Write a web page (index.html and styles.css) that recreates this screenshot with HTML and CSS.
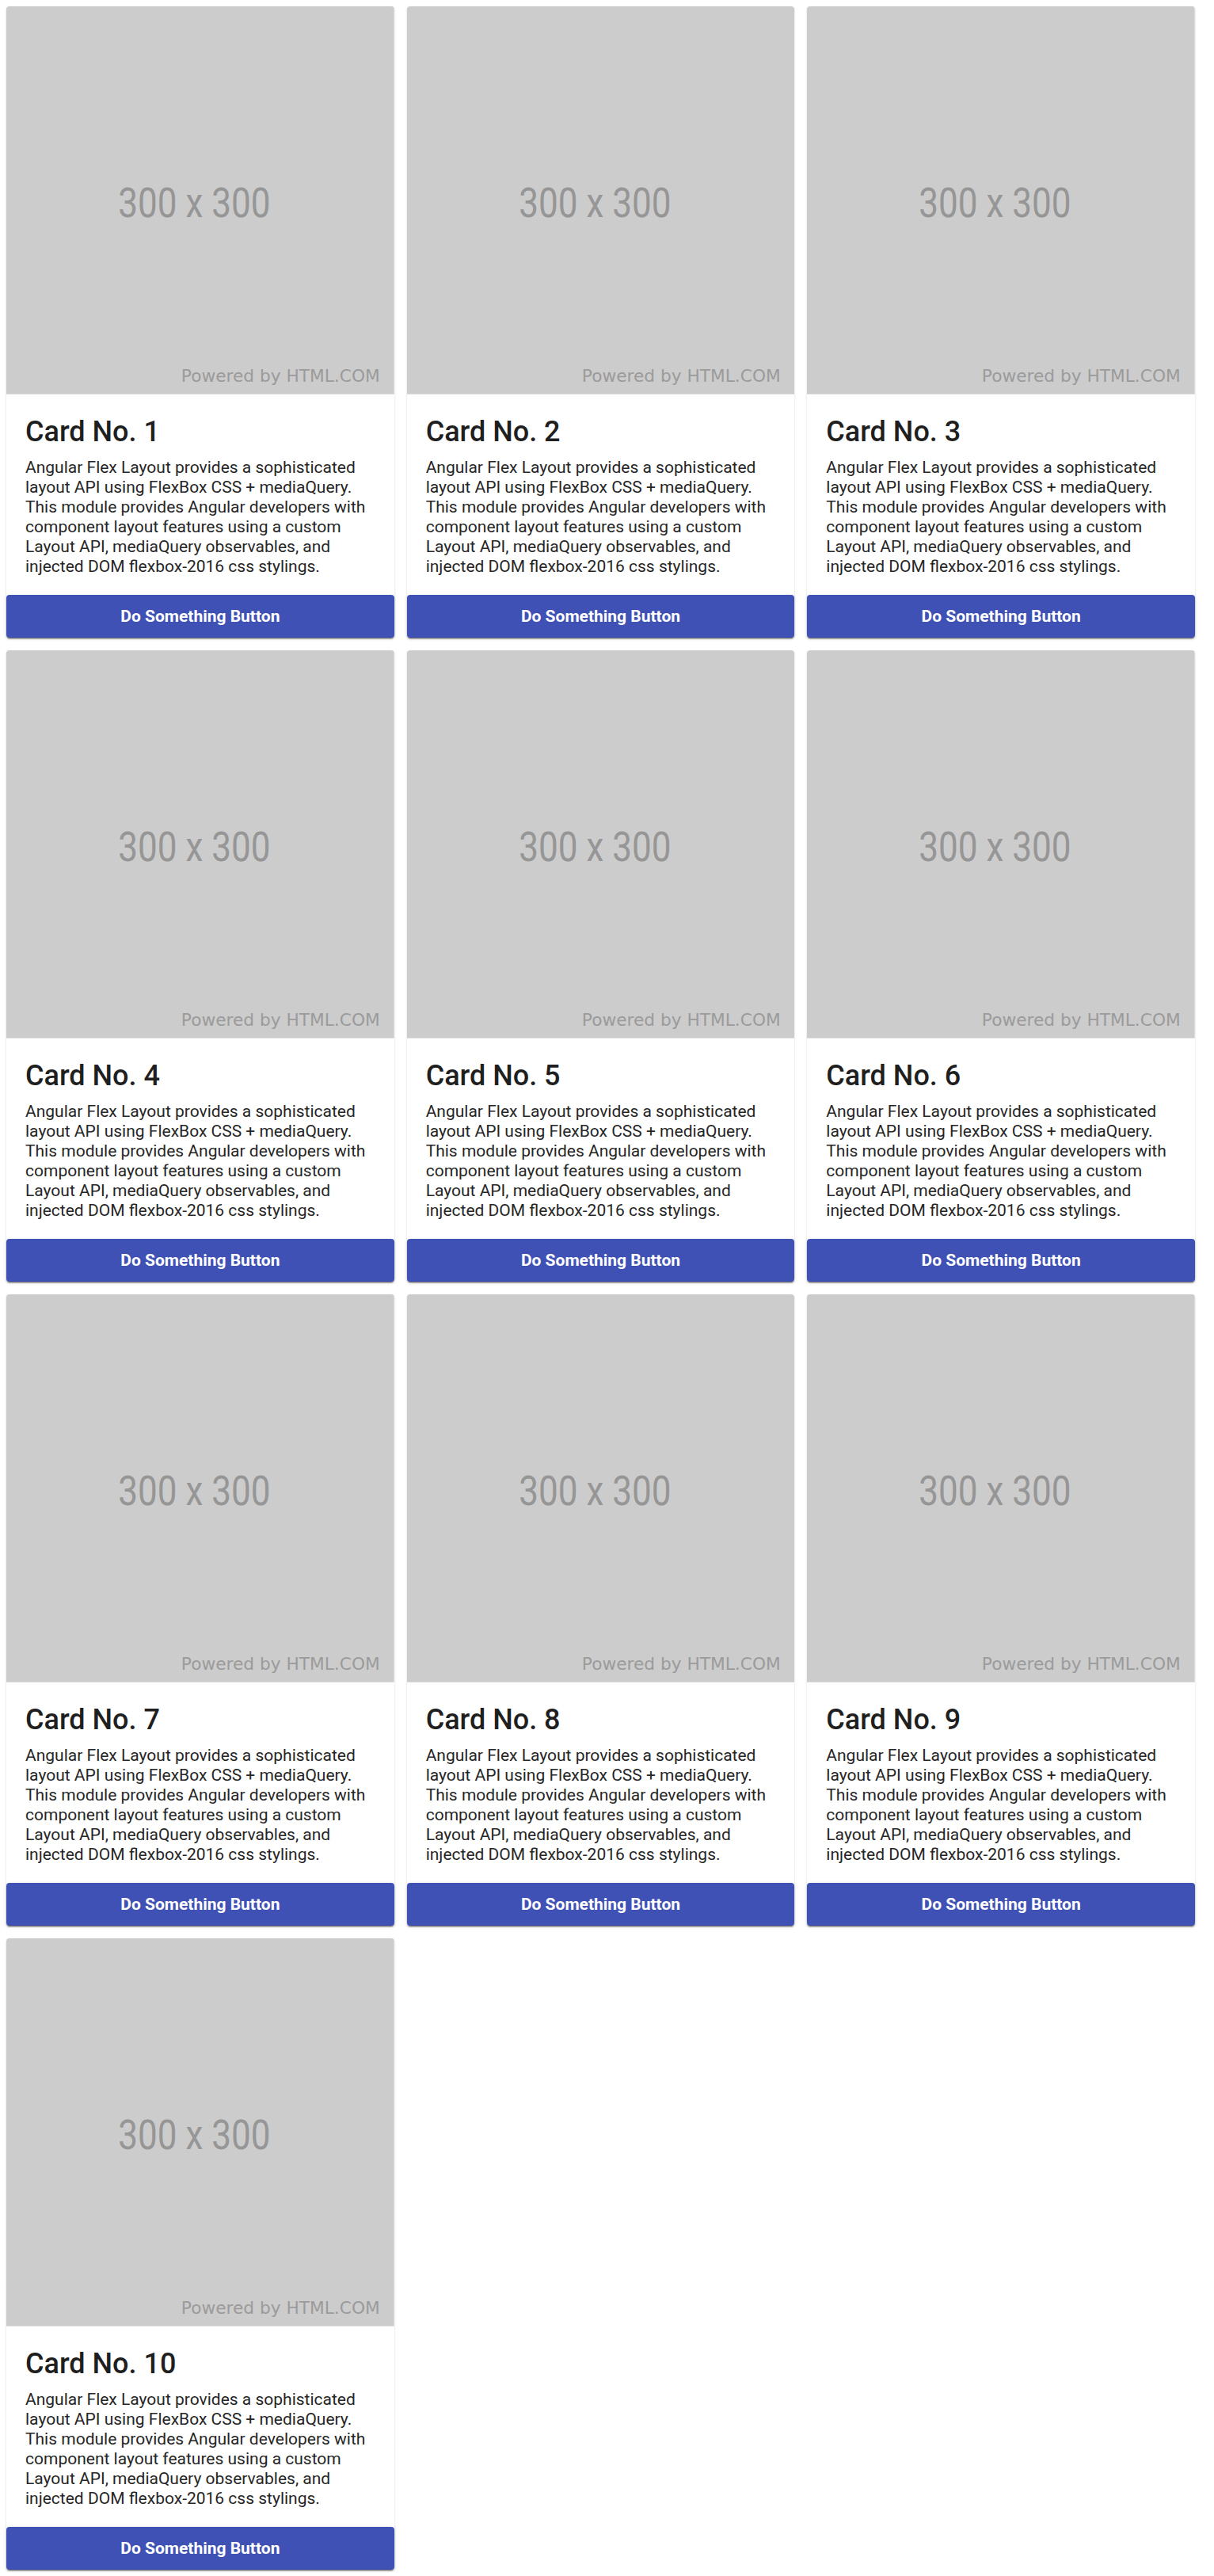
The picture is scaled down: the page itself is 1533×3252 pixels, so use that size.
FILE: index.html
```html
<!DOCTYPE html>
<html lang="en">
<head>
<meta charset="utf-8">
<title>Cards</title>
<link rel="stylesheet" href="styles.css">
</head>
<body>
<div class="grid" id="grid">
</div>
<script src="app.js"></script>
</body>
</html>
```
FILE: app.js
```js
(function () {
  var grid = document.getElementById('grid');
  var text = 'Angular Flex Layout provides a sophisticated layout API using FlexBox CSS + mediaQuery. This module provides Angular developers with component layout features using a custom Layout API, mediaQuery observables, and injected DOM flexbox-2016 css stylings.';
  var html = '';
  for (var i = 1; i <= 10; i++) {
    html += '<div class="card">' +
      '<svg class="ph" viewBox="0 0 300 300" preserveAspectRatio="none">' +
      '<rect width="300" height="300" fill="#cccccc"/>' +
      '<text class="ph-size" x="86.5" y="162.9" textLength="117.8" lengthAdjust="spacingAndGlyphs">300 x 300</text>' +
      '<text class="ph-by" x="135.3" y="290.2" textLength="153.7" lengthAdjust="spacingAndGlyphs">Powered by HTML.COM</text>' +
      '</svg>' +
      '<div class="content">' +
      '<h2 class="title">Card No. ' + i + '</h2>' +
      '<p class="desc">' + text + '</p>' +
      '</div>' +
      '<button class="btn">Do Something Button</button>' +
      '</div>';
  }
  grid.innerHTML = html;
})();
```
FILE: styles.css
```css
html, body {
  margin: 0;
  padding: 0;
  background: #ffffff;
}
body {
  padding: 8px;
  font-family: Roboto, "Liberation Sans", sans-serif;
  color: rgba(0, 0, 0, 0.87);
}
.grid {
  display: grid;
  grid-template-columns: repeat(3, calc(33.3333% - 16px));
  column-gap: 16px;
  row-gap: 16px;
}
.card {
  background: #ffffff;
  border-radius: 4px;
  box-shadow: 0 2px 1px -1px rgba(0,0,0,.2), 0 1px 1px 0 rgba(0,0,0,.14), 0 1px 3px 0 rgba(0,0,0,.12);
  display: flex;
  flex-direction: column;
  height: 797px;
}
.ph {
  display: block;
  width: 100%;
  aspect-ratio: 1 / 1;
  height: auto;
  border-radius: 4px 4px 0 0;
}
.ph-size {
  font-family: Roboto, sans-serif;
  font-size: 32px;
  fill: #969696;
}
.ph-by {
  font-family: "DejaVu Sans", sans-serif;
  font-size: 13.3px;
  fill: #9b9b9b;
}
.content {
  padding: 0 24px;
  flex: 1;
}
.title {
  margin: 25px 0 0;
  font-size: 36px;
  line-height: 44px;
  font-weight: 500;
  color: #1f1f1f;
}
.desc {
  margin: 11px 0 0;
  font-size: 21px;
  line-height: 25px;
  color: #262626;
}
.btn {
  display: block;
  width: 100%;
  height: 54px;
  border: 0;
  border-radius: 4px;
  background: #3f51b5;
  color: #ffffff;
  font-family: Roboto, sans-serif;
  font-size: 21px;
  font-weight: 700;
  box-shadow: 0 3px 1px -2px rgba(0,0,0,.2), 0 2px 2px 0 rgba(0,0,0,.14), 0 1px 5px 0 rgba(0,0,0,.12);
  cursor: pointer;
  padding: 0;
}
```
